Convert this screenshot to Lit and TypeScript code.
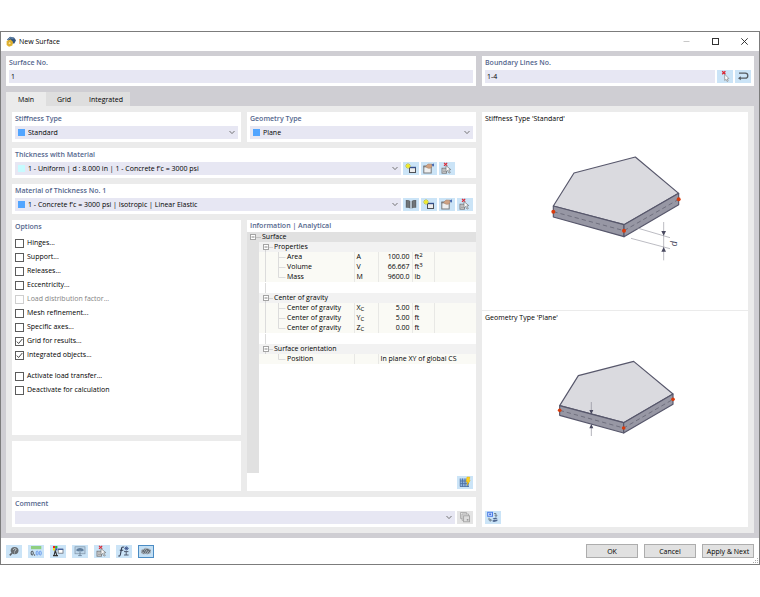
import { LitElement, html, svg, css, nothing } from "lit";
import { customElement, property } from "lit/decorators.js";

const glyphs: Record<string, unknown> = {
  create: svg`
    <rect x="6.5" y="5.5" width="6" height="5" fill="#ededed" stroke="#4f5156" stroke-width="1"/>
    <path d="M6 5.5h7" stroke="#34508c" stroke-width="1.4"/>
    <path d="M5 1v6M2 4h6M3 2l4 4M7 2L3 6" stroke="#bdb92a" stroke-width=".8"/>
    <circle cx="5" cy="4" r="1.8" fill="#f4ec1c"/>`,
  edit: svg`
    <rect x="2.8" y="4" width="7.4" height="7" fill="#efefef" stroke="#77797c" stroke-width="1"/>
    <path d="M2.5 4.8h8" stroke="#6c6e71" stroke-width="1"/>
    <path d="M4.5 4.5L7 2l4 .2v2.4L9.5 6.2H7z" fill="#cfa283" stroke="#a27c62" stroke-width=".5"/>
    <path d="M10.6 2.2l2.4-.6v2.8l-1.6-.3z" fill="#4a6cb0"/>`,
  clear: svg`
    <path d="M5 .9l3.2 3M8.2 .9L5 3.9" stroke="#dc2834" stroke-width="1.2"/>
    <rect x="3" y="6.2" width="4.4" height="5" fill="#dcdcdc" stroke="#77797c" stroke-width=".9"/>
    <path d="M4 8h2.4M4 9.6h2.4" stroke="#85878a" stroke-width=".7"/>
    <path d="M7 3.6l4.8 4-2.1.3 1.6 2.6-1.3.6-1.4-2.6L7 10z" fill="#fafafa" stroke="#6e7276" stroke-width=".7"/>`,
  pick: svg`
    <path d="M5.2 1.2l3.2 3M8.4 1.2l-3.2 3" stroke="#dc2330" stroke-width="1.3"/>
    <path d="M7.7 4.2v6.3l1.4-1.2 1 2.2 1.1-.5-1-2.1 1.7-.3z" fill="#fff" stroke="#858585" stroke-width=".7"/>`,
  reverse: svg`
    <path d="M4 3.2h6.3a2.3 2.3 0 0 1 0 5H4.5" fill="none" stroke="#555b61" stroke-width="1.3"/>
    <path d="M3 8.2l2.8-2v4z" fill="#555b61"/>`,
  library: svg`
    <path d="M2.8 2h2.4l2.3.9v7.7l-2.3-.9H2.8zM13.2 2h-2.4l-2.3.9v7.7l2.3-.9h2.4z" fill="#63676a"/>
    <path d="M5 2.3v7.2M11 2.3v7.2" stroke="#8b8f93" stroke-width=".7"/>
    <path d="M8 2.8v7.6" stroke="#dfe7ee" stroke-width=".7"/>`,
  gridcalc: svg`
    <rect x="3" y="2.5" width="9" height="8" fill="#8fb5e2"/>
    <path d="M3 5h9M3 7.6h9M5.5 2.5v8.2M8 2.5v8.2M3 10.5h9M10.8 4v7M3.2 2.5v8" stroke="#4a6d9d" stroke-width=".8"/>
    <path d="M10 1h2.8l-.6 3.4h1L10 9.4l.5-3.6H9z" fill="#ffd11a" stroke="#dfa800" stroke-width=".4"/>`,
  copy: svg`
    <path d="M3.5 1.5h6v1.8M3.5 1.5v6h1.8M5 3h6.5v2M5 3v6.3h1.6" fill="none" stroke="#aaa" stroke-width=".9"/>
    <rect x="6.6" y="4.8" width="5.9" height="6" fill="#ddd" stroke="#a2a2a2" stroke-width=".9"/>
    <rect x="9.8" y="8" width="1.6" height="1.6" fill="#999"/>`,
  swap: svg`
    <rect x="2.7" y="1.3" width="4.8" height="4" fill="#d6e4ff" stroke="#4b7ce6" stroke-width="1"/>
    <rect x="4.2" y="2.5" width="2" height="1.6" fill="#3f73e0"/>
    <path d="M4 6.8v2.4h2M5.2 7.8l1.2 1.4-1.2 1.4M9 2.6h2v2.4M9.9 4.2L11 5.6l1.1-1.4" fill="none" stroke="#59646f" stroke-width=".8"/>
    <path d="M7.6 7.4L11 6.6l1.5 1L9 8.4zM7.6 9.2l4.8-.8v1.5L9 11l-1.4-.6z" fill="#4d668f"/>`,
  help: svg`
    <ellipse cx="8.6" cy="5.6" rx="3.9" ry="3.6" fill="#676c70"/>
    <path d="M5.8 8.2L3.8 10.4" stroke="#5a5f64" stroke-width="1.6"/>
    <path d="M7.3 4.8c.2-1.8 3-1.5 2.6.1-.2.8-1.3.8-1.3 1.7M8.5 7.5v.9" fill="none" stroke="#d2dce2" stroke-width=".9"/>`,
  decimals: svg`
    <rect x="3" y="1" width="10.3" height="3.2" fill="#8fcf80"/>
    <rect x="3.2" y="6.2" width="2" height="3.8" rx="1" fill="none" stroke="#3c3e42" stroke-width=".9"/>
    <path d="M6.6 9.4v1.3" stroke="#3c3e42" stroke-width=".9"/>
    <rect x="8.2" y="6.2" width="1.9" height="3.8" rx=".9" fill="none" stroke="#6596ec" stroke-width=".9"/>
    <rect x="11.3" y="6.2" width="1.9" height="3.8" rx=".9" fill="none" stroke="#6596ec" stroke-width=".9"/>`,
  display: svg`
    <rect x="3" y="1" width="2.2" height="2.2" fill="#f02020"/><rect x="5.2" y="1" width="2.2" height="2.2" fill="#24b83a"/>
    <rect x="3" y="3.2" width="2.2" height="2.2" fill="#f5e400"/><rect x="5.2" y="3.2" width="2.2" height="2.2" fill="#3d55b0"/>
    <path d="M5.3 5.5L4 10.6M5.3 5.5l1.5 5M3 10.6h5" stroke="#333" stroke-width="1.1"/>
    <rect x="8.2" y="4.2" width="4.8" height="4" fill="#fff" stroke="#6a6f7a" stroke-width=".8"/>
    <path d="M8 4.3h5.2" stroke="#3d5c9c" stroke-width="1.2"/>`,
  view: svg`
    <rect x="3" y="1.8" width="10" height="7" fill="#bcd5e9" stroke="#7e93a7" stroke-width=".7"/>
    <path d="M4 5.2c1.8-2.8 6.2-2.8 8 0L9.8 6.4 8 5.4 6.2 6.4z" fill="#5f7d9c"/>
    <path d="M8 5v5.4M6.2 10.6h3.6" stroke="#6a8199" stroke-width=".9"/>`,
  formula: svg`
    <path d="M8 2.2c-2-.8-2.4.6-2.7 2.6L4.4 9.5c-.3 1.5-1 1.9-2 1.3M3.8 5.2h3.5" fill="none" stroke="#333d52" stroke-width="1.1"/>
    <path d="M10.3 1.2v4.4M8.2 3.4h4.6M8.8 1.9l3.2 3M12 1.9l-3.2 3" stroke="#38508a" stroke-width=".8"/>
    <path d="M8 6.6h4.4M8 10h4.6M10.2 6.6V10" stroke="#444e63" stroke-width=".9"/>`,
  gears: svg`
    <path d="M3 7.5c-.6-2 .8-3.6 2.6-3.4C6.4 2.6 9 2.4 10 3.6c2-.2 3.3 1 3 2.6.3 1.7-1 2.8-2.4 2.6-.8 1-2.2.8-2.8 0C6 9.8 3.6 9.4 3 7.5z" fill="#a4b0ba"/>
    <path d="M4 7.6L6.6 4.4M5.6 8.6l3-4.6M7.8 8.4l2.6-3.8M10 8.6l2.2-3.4M4.6 5l2 2.4M9 4l3 2.4" stroke="#596067" stroke-width="1"/>`,
};

@customElement("icon-button")
class IconButton extends LitElement {
  @property() name = "";
  @property() label = "";
  @property({ type: Boolean }) active = false;
  @property({ type: Boolean }) disabled = false;
  static styles = css`
    :host { display: block; flex: none; }
    button { display: block; width: 16px; height: 13px; padding: 0; border: 0; background: #cbe4f7; }
    button:disabled { background: #e4e4e4; }
    .active { background: #c3dff4; outline: 1px solid #4b8cc4; outline-offset: -1px; }
    svg { display: block; width: 16px; height: 13px; }
  `;
  render() {
    return html`<button type="button" class=${this.active ? "active" : ""} aria-label=${this.label} ?disabled=${this.disabled}>
      <svg viewBox="0 0 16 13" aria-hidden="true">${glyphs[this.name]}</svg>
    </button>`;
  }
}

type Row = { kind: "group" | "item" | "last" | "gap"; name?: string; symbol?: unknown; value?: string; unit?: unknown };
const rows: Row[] = [
  { kind: "group", name: "Properties" },
  { kind: "item", name: "Area", symbol: "A", value: "100.00", unit: html`ft<sup>2</sup>` },
  { kind: "item", name: "Volume", symbol: "V", value: "66.667", unit: html`ft<sup>3</sup>` },
  { kind: "last", name: "Mass", symbol: "M", value: "9600.0", unit: "lb" },
  { kind: "gap" },
  { kind: "group", name: "Center of gravity" },
  { kind: "item", name: "Center of gravity", symbol: html`X<sub>C</sub>`, value: "5.00", unit: "ft" },
  { kind: "item", name: "Center of gravity", symbol: html`Y<sub>C</sub>`, value: "5.00", unit: "ft" },
  { kind: "last", name: "Center of gravity", symbol: html`Z<sub>C</sub>`, value: "0.00", unit: "ft" },
  { kind: "gap" },
  { kind: "group", name: "Surface orientation" },
];

const options = [
  { text: "Hinges..." }, { text: "Support..." }, { text: "Releases..." }, { text: "Eccentricity..." },
  { text: "Load distribution factor...", off: true },
  { text: "Mesh refinement..." }, { text: "Specific axes..." },
  { text: "Grid for results...", on: true }, { text: "Integrated objects...", on: true },
];
const extraOptions = [{ text: "Activate load transfer..." }, { text: "Deactivate for calculation" }];

@customElement("app-root")
class AppRoot extends LitElement {
  static styles = css`
    :host { display: flex; box-sizing: border-box; min-height: 100vh; padding: 31px 0 32px; background: #fff;
      font: 7px/10px "Open Sans", "Noto Sans", sans-serif; color: #000; }
    * { box-sizing: border-box; }
    button, input, select { font: inherit; color: inherit; margin: 0; border-radius: 0; }
    .window { flex: 1; min-width: 0; display: flex; flex-direction: column; border: 1px solid #7c7c7c; background: #fff; }
    .titlebar { display: flex; align-items: center; height: 19px; padding-left: 5px; }
    .logo { width: 10px; height: 11px; margin-right: 3px; }
    h1 { flex: 1; margin: 0; font: inherit; }
    .caption { width: 29px; height: 19px; padding: 0; border: 0; background: none; }
    .caption svg { display: block; margin: auto; width: 9px; height: 9px; }
    .body { flex: 1; display: flex; flex-direction: column; padding: 5px; background: #cfced3; }
    .numbers { display: grid; grid-template-columns: minmax(0, 470fr) minmax(0, 272fr); gap: 6px; margin-bottom: 6px; }
    .panel { background: #fff; padding: 0 3px 3px; min-width: 0; }
    .heading { display: block; height: 14px; margin: 0; padding-top: 1px; font-size: 7px; font-weight: 600; line-height: 11px; color: #54668d; }
    .line { display: flex; gap: 2px; height: 13px; }
    .field { flex: 1; min-width: 0; display: flex; align-items: center; height: 13px; background: #e7e7f3; }
    .field input { width: 100%; height: 13px; padding: 0 2px; border: 0; background: none; }
    .field select { flex: 1; min-width: 0; height: 13px; padding: 1px 4px 0 3px; border: 0; background: none; appearance: none; }
    .swatch { flex: none; width: 7px; height: 7px; margin-left: 3px; background: #52a5ff; }
    .pale { background: #c8fbff; }
    .chevron { flex: none; width: 6px; height: 5px; margin-right: 3px; pointer-events: none; }
    .keep { width: 70px; display: flex; gap: 2px; }
    .tabs { display: flex; height: 14px; }
    .tab { min-width: 36px; height: 14px; padding: 2px 7px 0; border: 0; background: #dedede; line-height: 12px; text-align: center; }
    .selected { min-width: 40px; background: #ebebeb; }
    .page { flex: 1; display: grid; grid-template-columns: minmax(0, 464fr) minmax(0, 266fr); gap: 6px; padding: 6px; background: #ebebeb; }
    .left { display: flex; flex-direction: column; gap: 6px; min-width: 0; }
    .pair { display: grid; grid-template-columns: minmax(0, 1fr) minmax(0, 1fr); gap: 6px; }
    .grow { flex: 1; }
    .stack { display: flex; flex-direction: column; gap: 6px; }
    .blank { height: 50px; background: #fff; }
    .checks { margin: 0; padding: 0; list-style: none; }
    .first { padding-top: 2px; }
    .more { padding-top: 7px; }
    .check { display: flex; align-items: center; gap: 3px; height: 14px; }
    .check input { appearance: none; display: block; width: 9px; height: 9px; border: 1px solid #5c5c5c; background: #fff; }
    .box { position: relative; display: flex; }
    .tick { position: absolute; inset: 1px; width: 7px; height: 7px; pointer-events: none; }
    .off { color: #838383; }
    .off input { border-color: #cfcfcf; }
    .info { display: flex; flex-direction: column; background: #fff; }
    .info .heading { height: 12px; padding-top: 0; padding-left: 3px; }
    .tree { flex: 1; background: linear-gradient(90deg, #e1e1e1 12px, #fff 12px); }
    table { width: 100%; border-collapse: collapse; table-layout: fixed; }
    td, th { height: 10px; padding: 0; font-weight: 400; text-align: left; line-height: 10px; white-space: nowrap; }
    .gutter { width: 12px; } .names { width: 95px; } .symbols { width: 24px; } .values { width: 34px; } .units { width: 22px; }
    .root th { background: #e1e1e1; }
    .group th + th { background: #f2f2f2; }
    .item td + td, .item th { background: #fafaf5; }
    .item td + td, .item th + td { background: #fafaf5; border-left: 1px solid #e8e8e5; padding-left: 2px; }
    .item .amount { padding: 0 2px 0 0; text-align: right; }
    .gap td { height: 11px; }
    .node { display: flex; align-items: center; height: 10px; }
    .twig { display: block; flex: none; height: 10px; }
    .t1 { width: 15px; } .t2 { width: 28px; }
    sup, sub { font-size: 6px; line-height: 0; }
    sup { vertical-align: 2px; } sub { vertical-align: -1px; }
    .corner { display: flex; justify-content: flex-end; padding: 3px 3px 2px; }
    .right { display: flex; flex-direction: column; gap: 1px; min-width: 0; }
    .preview { display: flex; flex-direction: column; background: #fff; padding: 1px 3px 3px; }
    .preview p { margin: 0; line-height: 11px; }
    .top { height: 198px; }
    .drawing { display: block; align-self: center; max-width: 100%; }
    .standard { width: 170px; height: 130px; margin-top: 16px; }
    .plane { width: 170px; height: 100px; margin-top: 27px; }
    .bottom { margin-top: auto; }
    .footer { position: relative; display: flex; align-items: center; gap: 6px; height: 26px; padding: 0 5px; }
    .push { flex: 1; }
    .action { width: 52px; height: 14px; padding: 1px 0 0; border: 1px solid #adadad; background: #e1e1e1; line-height: 11px; white-space: nowrap; }
    .footer-end { display: flex; gap: 6px; }
    .grip { position: absolute; right: 0; bottom: 0; width: 6px; height: 6px; }
  `;

  chevron() {
    return html`<svg class="chevron" viewBox="0 0 6 5" aria-hidden="true"><path d="M.5 1L3 3.6 5.5 1" fill="none" stroke="#666" stroke-width=".9"/></svg>`;
  }
  combo(id: string, text: string, swatch = "swatch") {
    return html`<div class="field">
      ${text ? html`<span class=${swatch}></span>` : nothing}
      <select id=${id}><option>${text}</option></select>${this.chevron()}
    </div>`;
  }
  check(o: { text: string; on?: boolean; off?: boolean }) {
    return html`<li><label class="check ${o.off ? "off" : ""}">
      <span class="box"><input type="checkbox" ?checked=${o.on} ?disabled=${o.off}>
      ${o.on ? html`<svg class="tick" viewBox="0 0 7 7" aria-hidden="true"><path d="M.8 3.6l1.8 1.9L6.3 1" fill="none" stroke="#333" stroke-width=".9"/></svg>` : nothing}</span>
      ${o.text}</label></li>`;
  }
  group(name: string) {
    return html`<span class="node"><svg class="twig t1" viewBox="0 0 15 10" aria-hidden="true">
      <path d="M6.5 8v2M9 5.5h5" stroke="#d5d5d5"/><rect x="4.5" y="2.5" width="5" height="5" fill="#fff" stroke="#a4a4a4"/><path d="M5.5 5h3" stroke="#666" stroke-width=".8"/></svg>${name}</span>`;
  }
  leaf(name: string, last: boolean, rail = true) {
    const branch = last ? "M19.5 0v5.5h7" : "M19.5 0v10M19.5 5.5h7";
    return html`<span class="node"><svg class="twig t2" viewBox="0 0 28 10" aria-hidden="true">
      <path d=${rail ? `M6.5 0v10${branch}` : branch} fill="none" stroke="#dcdcdc"/></svg>${name}</span>`;
  }
  row(r: Row) {
    if (r.kind === "gap") return html`<tr class="gap"><td></td><td colspan="5"><svg class="twig t1" viewBox="0 0 15 10" aria-hidden="true"><path d="M6.5 0v10" stroke="#dcdcdc"/></svg></td></tr>`;
    if (r.kind === "group") return html`<tr class="group"><th></th><th colspan="5">${this.group(r.name!)}</th></tr>`;
    return html`<tr class="item"><td></td><th scope="row">${this.leaf(r.name!, r.kind === "last")}</th>
      <td>${r.symbol}</td><td class="amount">${r.value}</td><td>${r.unit}</td><td></td></tr>`;
  }

  render() {
    return html`<main class="window">
      <header class="titlebar">
        <svg class="logo" viewBox="0 0 10 11" aria-hidden="true">
          <path d="M1 3.5L4 .8l4 .7 2 2.8-1.6 3.2H5z" fill="#34567e"/><path d="M2 3.6l2.5-1.8 3 .6" fill="none" stroke="#8bb0d6" stroke-width=".7"/>
          <path d="M.6 5L4.6 3.6l2.4 2.5-.6 3.4L3 10.8.6 9z" fill="#e3b32d"/><circle cx="3.6" cy="7.2" r="1.4" fill="#ffe58a" stroke="#b98c22" stroke-width=".5"/>
        </svg>
        <h1>New Surface</h1>
        <button class="caption" aria-label="Minimize" disabled><svg viewBox="0 0 9 9"><path d="M1.5 4.5h6" stroke="#c8c8c8"/></svg></button>
        <button class="caption" aria-label="Maximize"><svg viewBox="0 0 9 9"><rect x="1.5" y="1.5" width="6" height="6" fill="none" stroke="#333"/></svg></button>
        <button class="caption" aria-label="Close"><svg viewBox="0 0 9 9"><path d="M1.3 1.3l6.4 6.4M7.7 1.3L1.3 7.7" stroke="#222" stroke-width=".9"/></svg></button>
      </header>
      <div class="body">
        <div class="numbers">
          <div class="panel"><label class="heading" for="no">Surface No.</label>
            <div class="line"><div class="field"><input id="no" .value=${"1"}></div></div></div>
          <div class="panel"><label class="heading" for="lines">Boundary Lines No.</label>
            <div class="line"><div class="field"><input id="lines" .value=${"1-4"}></div>
              <icon-button name="pick" label="Select lines"></icon-button><icon-button name="reverse" label="Reverse"></icon-button></div></div>
        </div>
        <div class="tabs" role="tablist">
          <button class="tab selected" role="tab" aria-selected="true">Main</button>
          <button class="tab" role="tab" aria-selected="false">Grid</button>
          <button class="tab" role="tab" aria-selected="false">Integrated</button>
        </div>
        <div class="page">
          <div class="left">
            <div class="pair">
              <div class="panel"><label class="heading" for="stiffness">Stiffness Type</label><div class="line">${this.combo("stiffness", "Standard")}</div></div>
              <div class="panel"><label class="heading" for="geometry">Geometry Type</label><div class="line">${this.combo("geometry", "Plane")}</div></div>
            </div>
            <div class="panel"><label class="heading" for="thickness">Thickness with Material</label>
              <div class="line">${this.combo("thickness", "1 - Uniform | d : 8.000 in | 1 - Concrete f'c = 3000 psi", "swatch pale")}
                <div class="keep"><icon-button name="create" label="New thickness"></icon-button><icon-button name="edit" label="Edit thickness"></icon-button><icon-button name="clear" label="Select thickness"></icon-button></div></div></div>
            <div class="panel"><label class="heading" for="material">Material of Thickness No. 1</label>
              <div class="line">${this.combo("material", "1 - Concrete f'c = 3000 psi | Isotropic | Linear Elastic")}
                <div class="keep"><icon-button name="library" label="Material library"></icon-button><icon-button name="create" label="New material"></icon-button><icon-button name="edit" label="Edit material"></icon-button><icon-button name="clear" label="Select material"></icon-button></div></div></div>
            <div class="pair grow">
              <div class="stack">
                <section class="panel grow"><h2 class="heading">Options</h2>
                  <ul class="checks first">${options.map((o) => this.check(o))}</ul>
                  <ul class="checks more">${extraOptions.map((o) => this.check(o))}</ul></section>
                <div class="blank"></div>
              </div>
              <section class="info"><h2 class="heading">Information | Analytical</h2>
                <div class="tree"><table>
                  <colgroup><col class="gutter"><col class="names"><col class="symbols"><col class="values"><col class="units"><col></colgroup>
                  <tbody>
                    <tr class="root"><th colspan="6"><span class="node"><svg class="twig t1" viewBox="0 0 15 10" aria-hidden="true">
                      <path d="M9 5.5h5" stroke="#c4c4c4"/><rect x="3.5" y="2.5" width="5" height="5" fill="#fff" stroke="#a4a4a4"/><path d="M4.5 5h3" stroke="#666" stroke-width=".8"/></svg>Surface</span></th></tr>
                    ${rows.map((r) => this.row(r))}
                    <tr class="item"><td></td><th scope="row">${this.leaf("Position", true, false)}</th><td></td><td colspan="3">In plane XY of global CS</td></tr>
                  </tbody></table></div>
                <div class="corner"><icon-button name="gridcalc" label="Calculate information"></icon-button></div>
              </section>
            </div>
            <div class="panel"><label class="heading" for="comment">Comment</label>
              <div class="line">${this.combo("comment", "")}<icon-button name="copy" label="Copy comment" disabled></icon-button></div></div>
          </div>
          <div class="right">
            <section class="preview top"><p>Stiffness Type 'Standard'</p>
              <svg class="drawing standard" viewBox="0 0 510 390" role="img" aria-label="Standard stiffness">
                <g stroke="#57576b" stroke-width="3.5" stroke-linejoin="round">
                  <path d="M70 198L132 99 316 51 446 160 282 254z" fill="#dadadf"/>
                  <path d="M70 198L282 254V290L70 231z" fill="#9797a4"/><path d="M282 254L446 160V194L282 290z" fill="#9797a4"/>
                </g>
                <path d="M70 215L282 272 446 178" fill="none" stroke="#5b5b6a" stroke-width="2" stroke-dasharray="13 9"/>
                <path d="M315 262L420 293M303 295L420 326M401 246V361" stroke="#9a9aa4" stroke-width="2"/>
                <path d="M401 287l-7-14h14zM401 321l-7 14h14z" fill="#4a4a60"/>
                <g fill="#d93a0b"><circle cx="70" cy="215" r="6"/><circle cx="282" cy="272" r="6"/><circle cx="446" cy="178" r="6"/></g>
                <text x="0" y="0" transform="translate(441 319) rotate(-90)" font-size="27" font-style="italic" font-family="Liberation Sans, sans-serif" fill="#4a4a60">d</text>
              </svg></section>
            <section class="preview grow"><p>Geometry Type 'Plane'</p>
              <svg class="drawing plane" viewBox="0 0 510 300" role="img" aria-label="Plane geometry">
                <g stroke="#57576b" stroke-width="3.5" stroke-linejoin="round">
                  <path d="M89 167L145 77 311 34 429 132 281 218z" fill="#dadadf"/>
                  <path d="M89 167L281 218V249L89 196z" fill="#9797a4"/><path d="M281 218L429 132V163L281 249z" fill="#9797a4"/>
                </g>
                <path d="M89 181L281 234 429 148" fill="none" stroke="#5b5b6a" stroke-width="2" stroke-dasharray="13 9"/>
                <path d="M184 156V190M184 225V258" stroke="#8c8c97" stroke-width="2"/>
                <path d="M184 193l-6-13h12zM184 222l-6 13h12z" fill="#4a4a60"/>
                <g fill="#d93a0b"><circle cx="89" cy="181" r="5.5"/><circle cx="281" cy="234" r="5.5"/><circle cx="429" cy="148" r="5.5"/></g>
              </svg>
              <div class="bottom"><icon-button name="swap" label="Switch preview"></icon-button></div></section>
          </div>
        </div>
      </div>
      <footer class="footer">
        <icon-button name="help" label="Help"></icon-button><icon-button name="decimals" label="Units and decimals"></icon-button>
        <icon-button name="display" label="Display"></icon-button><icon-button name="view" label="View"></icon-button>
        <icon-button name="clear" label="Select object"></icon-button><icon-button name="formula" label="Formula"></icon-button>
        <icon-button name="gears" label="Settings" active></icon-button>
        <span class="push"></span>
        <div class="footer-end"><button class="action">OK</button><button class="action">Cancel</button><button class="action">Apply &amp; Next</button></div>
        <svg class="grip" viewBox="0 0 6 6" aria-hidden="true"><path d="M4 0h1v1H4zM2 2h1v1H2zM4 2h1v1H4zM0 4h1v1H0zM2 4h1v1H2zM4 4h1v1H4z" fill="#aaa"/></svg>
      </footer>
    </main>`;
  }
}
